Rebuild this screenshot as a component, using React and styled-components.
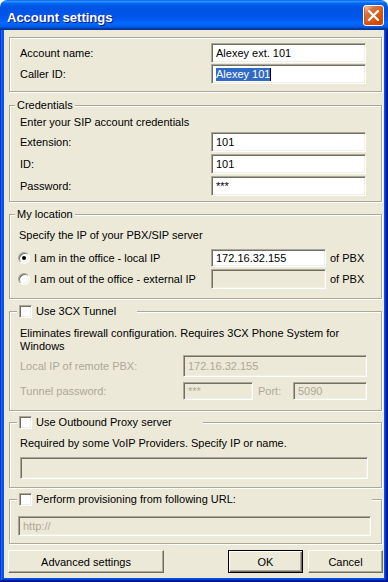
import React from 'react';
import styled, { createGlobalStyle } from 'styled-components';

const GlobalStyle = createGlobalStyle`
  html, body {
    margin: 0;
    padding: 0;
    background: #ffffff;
  }
  body {
    font-family: "Liberation Sans", Arial, sans-serif;
    font-size: 11px;
    color: #000;
  }
`;

const Window = styled.div`
  width: 388px;
  height: 582px;
  display: flex;
  flex-direction: column;
  overflow: hidden;
  border-radius: 7px 7px 0 0;
`;

const TitleBar = styled.div`
  height: 30px;
  flex-shrink: 0;
  display: flex;
  align-items: flex-start;
  justify-content: space-between;
  background: linear-gradient(
    to bottom,
    #0058ee 0%,
    #3593ff 4%,
    #288eff 6%,
    #127dff 8%,
    #036ffc 10%,
    #0262ee 14%,
    #0057e5 20%,
    #0054e3 24%,
    #0055eb 56%,
    #005bf5 66%,
    #026afe 76%,
    #0062ef 86%,
    #0052d6 92%,
    #0040ab 94%,
    #003092 100%
  );
`;

const TitleText = styled.span`
  padding: 11px 0 0 7px;
  font-family: "Liberation Sans", Arial, sans-serif;
  font-weight: bold;
  font-size: 13px;
  line-height: 13px;
  color: #fff;
  text-shadow: 1px 1px #0a1883;
`;

const CloseButton = styled.button`
  width: 21px;
  height: 21px;
  margin: 5px 4px 0 0;
  padding: 0;
  display: flex;
  align-items: center;
  justify-content: center;
  border: 1px solid #fff;
  border-radius: 3px;
  background-image: radial-gradient(circle at 90% 90%, #cc4600 0%, #dc6527 55%, #cd7546 70%, #ffccb2 90%, #fff 100%);
  box-shadow: inset 0 -1px 2px 1px #da4600;
`;

const Frame = styled.div`
  flex: 1;
  display: flex;
  padding: 0 4px 4px;
  background: #0055ea;
  box-shadow: inset -1px -1px #00138c, inset 1px 0 #0831d9, inset -2px -2px #001ea0,
    inset 2px 0 #166aee, inset -3px -3px #003bda, inset 3px 0 #0855dd;
`;

const Body = styled.div`
  flex: 1;
  display: flex;
  flex-direction: column;
  padding: 0 2px 0 5px;
  background: #ece9d8;
`;

const Group = styled.div`
  position: relative;
  box-sizing: border-box;
  display: flex;
  flex-direction: column;
  margin-top: ${p => p.$mt}px;
  height: ${p => p.$h}px;
  padding: ${p => p.$pt}px 0 0 ${p => p.$pl}px;
  border: 1px solid #aca899;
  box-shadow: inset 1px 1px #fff, 1px 1px #fff;
`;

const Caption = styled.div`
  position: absolute;
  top: -7px;
  left: ${p => p.$left}px;
  box-sizing: border-box;
  width: ${p => (p.$w ? `${p.$w}px` : 'auto')};
  height: 13px;
  padding: 0 2px;
  display: flex;
  align-items: center;
  gap: 4px;
  line-height: 13px;
  background: #ece9d8;
  white-space: nowrap;
`;

const Note = styled.div`
  padding-left: ${p => p.$indent || 0}px;
  line-height: 13px;
  white-space: nowrap;
`;

const Row = styled.div`
  display: flex;
  align-items: center;
  height: ${p => p.$h || 20}px;
  margin-top: ${p => p.$mt || 0}px;
`;

const Label = styled.span`
  width: ${p => p.$w}px;
  flex-shrink: 0;
  white-space: nowrap;
  color: ${p => (p.$disabled ? '#aca899' : '#000')};
`;

const PortLabel = styled(Label)`
  margin-left: 5px;
`;

const Field = styled.div`
  box-sizing: border-box;
  width: ${p => p.$w}px;
  height: 100%;
  flex-shrink: 0;
  display: flex;
  align-items: center;
  padding: 0 4px;
  border: 1px solid;
  border-color: #aca899 #fff #fff #aca899;
  box-shadow: inset 1px 1px #716f64, inset -1px -1px #f1efe2;
  background: ${p => (p.$disabled ? '#ece9d8' : '#fff')};
  color: ${p => (p.$disabled ? '#aca899' : '#000')};
  white-space: nowrap;
  overflow: hidden;
`;

const Selected = styled.span`
  line-height: 13px;
  background: #316ac5;
  color: #fff;
`;

const Caret = styled.span`
  width: 1px;
  height: 13px;
  background: #000;
`;

const Suffix = styled.span`
  margin-left: 4px;
  white-space: nowrap;
`;

const Check = styled.span`
  box-sizing: border-box;
  width: 13px;
  height: 13px;
  flex-shrink: 0;
  background: #fff;
  border: 1px solid;
  border-color: #aca899 #fff #fff #aca899;
  box-shadow: inset 1px 1px #716f64, inset -1px -1px #f1efe2;
`;

const Option = styled.label`
  width: ${p => p.$w}px;
  flex-shrink: 0;
  display: flex;
  align-items: center;
  gap: 4px;
  white-space: nowrap;
`;

const Radio = styled.span`
  position: relative;
  box-sizing: border-box;
  width: 12px;
  height: 12px;
  flex-shrink: 0;
  border-radius: 50%;
  background: #fff;
  border: 1px solid;
  border-color: #aca899 #fff #fff #aca899;
  box-shadow: inset 1px 1px #716f64, inset -1px -1px #f1efe2;

  &::after {
    content: '';
    display: ${p => (p.$checked ? 'block' : 'none')};
    position: absolute;
    left: 3px;
    top: 3px;
    width: 4px;
    height: 4px;
    border-radius: 50%;
    background: #000;
  }
`;

const ButtonRow = styled.div`
  display: flex;
  height: 23px;
  margin: 6px -1px 0 -1px;
`;

const Button = styled.button`
  box-sizing: border-box;
  width: ${p => p.$w}px;
  height: 23px;
  margin-left: ${p => p.$ml || '0'};
  padding: 0;
  font-family: "Liberation Sans", Arial, sans-serif;
  font-size: 11px;
  color: #000;
  background: #ece9d8;
  border: 1px solid;
  border-color: ${p => (p.$default ? '#000' : '#fff #716f64 #716f64 #fff')};
  box-shadow: ${p =>
    p.$default
      ? 'inset 1px 1px #fff, inset -1px -1px #716f64, inset -2px -2px #aca899'
      : 'inset -1px -1px #aca899'};
`;

const CloseIcon = () => (
  <svg width="11" height="11" viewBox="0 0 11 11">
    <path d="M1 1 L10 10 M10 1 L1 10" stroke="#fff" strokeWidth="2.2" strokeLinecap="square" />
  </svg>
);

export default function App() {
  return (
    <>
      <GlobalStyle />
      <Window>
        <TitleBar>
          <TitleText>Account settings</TitleText>
          <CloseButton aria-label="Close">
            <CloseIcon />
          </CloseButton>
        </TitleBar>
        <Frame>
          <Body>
            <Group $mt={7} $h={55} $pt={5} $pl={10}>
              <Row>
                <Label $w={191}>Account name:</Label>
                <Field $w={155}>Alexey ext. 101</Field>
              </Row>
              <Row $mt={1}>
                <Label $w={191}>Caller ID:</Label>
                <Field $w={155}>
                  <Selected>Alexey 101</Selected>
                  <Caret />
                </Field>
              </Row>
            </Group>

            <Group $mt={13} $h={97} $pt={10} $pl={10}>
              <Caption $left={5}>Credentials</Caption>
              <Note>Enter your SIP account credentials</Note>
              <Row $mt={3}>
                <Label $w={191}>Extension:</Label>
                <Field $w={155}>101</Field>
              </Row>
              <Row $mt={2}>
                <Label $w={191}>ID:</Label>
                <Field $w={155}>101</Field>
              </Row>
              <Row $mt={2}>
                <Label $w={191}>Password:</Label>
                <Field $w={155}>***</Field>
              </Row>
            </Group>

            <Group $mt={12} $h={85} $pt={14} $pl={8}>
              <Caption $left={5}>My location</Caption>
              <Note $indent={1}>Specify the IP of your PBX/SIP server</Note>
              <Row $mt={7} $h={18}>
                <Option $w={193}>
                  <Radio $checked />
                  I am in the office - local IP
                </Option>
                <Field $w={115}>172.16.32.155</Field>
                <Suffix>of PBX</Suffix>
              </Row>
              <Row $mt={2}>
                <Option $w={193}>
                  <Radio />
                  I am out of the office - external IP
                </Option>
                <Field $w={115} $disabled />
                <Suffix>of PBX</Suffix>
              </Row>
            </Group>

            <Group $mt={12} $h={100} $pt={15} $pl={10}>
              <Caption $left={7} $w={120}>
                <Check />
                Use 3CX Tunnel
              </Caption>
              <Note>
                Eliminates firewall configuration. Requires 3CX Phone System for
                <br />
                Windows
              </Note>
              <Row $mt={2} $h={22}>
                <Label $w={163} $disabled>Local IP of remote PBX:</Label>
                <Field $w={184} $disabled>172.16.32.155</Field>
              </Row>
              <Row $mt={5} $h={18}>
                <Label $w={163} $disabled>Tunnel password:</Label>
                <Field $w={70} $disabled>***</Field>
                <PortLabel $w={35} $disabled>Port:</PortLabel>
                <Field $w={74} $disabled>5090</Field>
              </Row>
            </Group>

            <Group $mt={11} $h={66} $pt={14} $pl={10}>
              <Caption $left={7} $w={186}>
                <Check />
                Use Outbound Proxy server
              </Caption>
              <Note>Required by some VoIP Providers. Specify IP or name.</Note>
              <Row $mt={7} $h={22}>
                <Field $w={348} $disabled />
              </Row>
            </Group>

            <Group $mt={11} $h={45} $pt={16} $pl={8}>
              <Caption $left={7} $w={355}>
                <Check />
                Perform provisioning from following URL:
              </Caption>
              <Row>
                <Field $w={353} $disabled>http://</Field>
              </Row>
            </Group>

            <ButtonRow>
              <Button $w={156}>Advanced settings</Button>
              <Button $w={75} $ml="auto" $default>OK</Button>
              <Button $w={75} $ml="5px">Cancel</Button>
            </ButtonRow>
          </Body>
        </Frame>
      </Window>
    </>
  );
}
